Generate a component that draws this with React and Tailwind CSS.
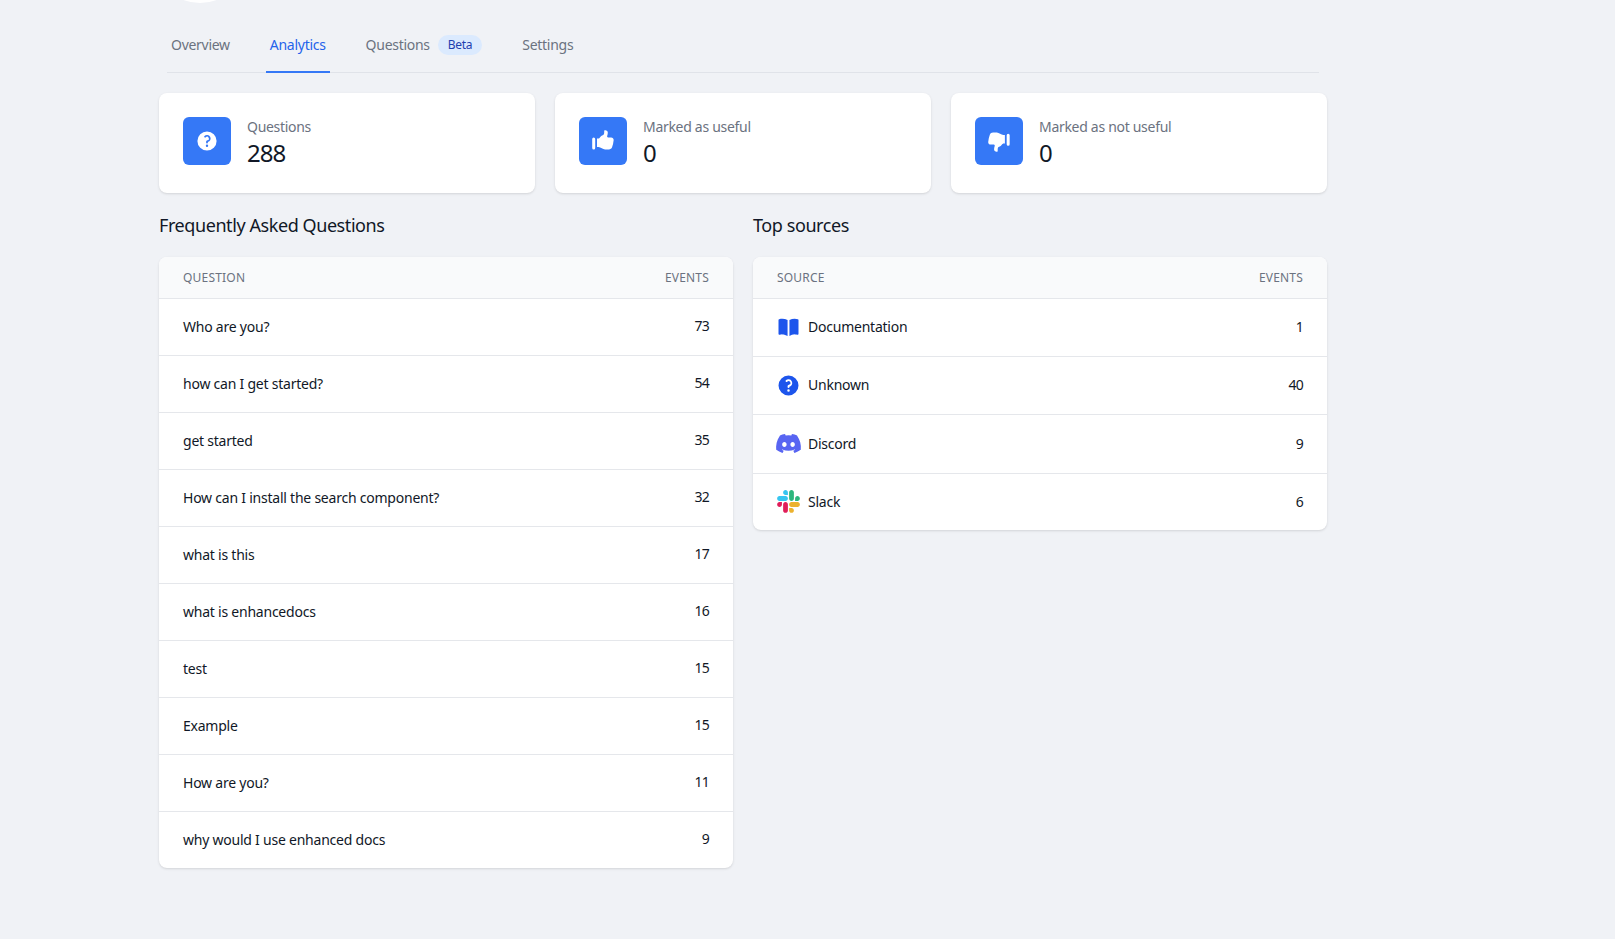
import React from "react";
import { FaDiscord } from "react-icons/fa";

const QuestionIcon = ({ className }) => (
  <svg viewBox="0 0 20 20" fill="currentColor" className={className}>
    <path fillRule="evenodd" clipRule="evenodd" d="M18 10a8 8 0 1 1-16 0 8 8 0 0 1 16 0ZM8.94 6.94a.75.75 0 1 1-1.061-1.061 3 3 0 1 1 2.871 5.026v.345a.75.75 0 0 1-1.5 0v-.5c0-.72.57-1.172 1.081-1.287A1.5 1.5 0 1 0 8.94 6.94ZM10 15a1 1 0 1 0 0-2 1 1 0 0 0 0 2Z" />
  </svg>
);

const ThumbUpIcon = ({ className }) => (
  <svg viewBox="0 0 20 20" fill="currentColor" className={className}>
    <path d="M1 8.25a1.25 1.25 0 1 1 2.5 0v7.5a1.25 1.25 0 1 1-2.5 0v-7.5ZM11 3V1.7c0-.268.14-.526.395-.607A2 2 0 0 1 14 3c0 .995-.182 1.948-.514 2.826-.204.54.166 1.174.744 1.174h2.52c1.243 0 2.261 1.01 2.146 2.247a23.864 23.864 0 0 1-1.341 5.974C17.153 16.323 16.072 17 14.9 17h-3.192a3 3 0 0 1-1.341-.317l-2.734-1.366A3 3 0 0 0 6.292 15H5V8h.963c.685 0 1.258-.483 1.612-1.068a4.011 4.011 0 0 1 2.166-1.73c.432-.143.853-.386 1.011-.814.16-.432.248-.9.248-1.388Z" />
  </svg>
);

const ThumbDownIcon = ({ className }) => (
  <svg viewBox="0 0 20 20" fill="currentColor" className={className}>
    <path d="M18.905 12.75a1.25 1.25 0 1 1-2.5 0v-7.5a1.25 1.25 0 0 1 2.5 0v7.5ZM8.905 17v1.3c0 .268-.14.526-.395.607A2 2 0 0 1 5.905 17c0-.995.182-1.948.514-2.826.204-.54-.166-1.174-.744-1.174h-2.52c-1.243 0-2.261-1.01-2.146-2.247.193-2.08.651-4.082 1.341-5.974C2.752 3.678 3.833 3 5.005 3h3.192a3 3 0 0 1 1.341.317l2.734 1.366A3 3 0 0 0 13.613 5h1.292v7h-.963c-.685 0-1.258.482-1.612 1.068a4.01 4.01 0 0 1-2.166 1.73c-.432.143-.853.386-1.011.814-.16.432-.248.9-.248 1.388Z" />
  </svg>
);

const BookIcon = ({ className }) => (
  <svg viewBox="0 0 20 20" fill="currentColor" className={className}>
    <path d="M10.75 16.82A7.462 7.462 0 0 1 15 15.5c.71 0 1.396.098 2.046.282A.75.75 0 0 0 18 15.06v-11a.75.75 0 0 0-.546-.721A9.006 9.006 0 0 0 15 3a8.963 8.963 0 0 0-4.25 1.065V16.82ZM9.25 4.065A8.963 8.963 0 0 0 5 3c-.85 0-1.673.118-2.454.339A.75.75 0 0 0 2 4.06v11a.75.75 0 0 0 .954.721A7.506 7.506 0 0 1 5 15.5c1.579 0 3.042.487 4.25 1.32V4.065Z" />
  </svg>
);

const SlackIcon = () => (
  <svg viewBox="0 0 127 127" className="h-[23px] w-[23px] shrink-0">
    <path d="M27.2 80c0 7.3-5.9 13.2-13.2 13.2C6.7 93.2.8 87.3.8 80c0-7.3 5.9-13.2 13.2-13.2h13.2V80zm6.6 0c0-7.3 5.9-13.2 13.2-13.2 7.3 0 13.2 5.9 13.2 13.2v33c0 7.3-5.9 13.2-13.2 13.2-7.3 0-13.2-5.9-13.2-13.2V80z" fill="#E01E5A" />
    <path d="M47 27c-7.3 0-13.2-5.9-13.2-13.2C33.8 6.5 39.7.6 47 .6c7.3 0 13.2 5.9 13.2 13.2V27H47zm0 6.7c7.3 0 13.2 5.9 13.2 13.2 0 7.3-5.9 13.2-13.2 13.2H13.9C6.6 60.1.7 54.2.7 46.9c0-7.3 5.9-13.2 13.2-13.2H47z" fill="#36C5F0" />
    <path d="M99.9 46.9c0-7.3 5.9-13.2 13.2-13.2 7.3 0 13.2 5.9 13.2 13.2 0 7.3-5.9 13.2-13.2 13.2H99.9V46.9zm-6.6 0c0 7.3-5.9 13.2-13.2 13.2-7.3 0-13.2-5.9-13.2-13.2V13.8C66.9 6.5 72.8.6 80.1.6c7.3 0 13.2 5.9 13.2 13.2v33.1z" fill="#2EB67D" />
    <path d="M80.1 99.8c7.3 0 13.2 5.9 13.2 13.2 0 7.3-5.9 13.2-13.2 13.2-7.3 0-13.2-5.9-13.2-13.2V99.8h13.2zm0-6.6c-7.3 0-13.2-5.9-13.2-13.2 0-7.3 5.9-13.2 13.2-13.2h33.1c7.3 0 13.2 5.9 13.2 13.2 0 7.3-5.9 13.2-13.2 13.2H80.1z" fill="#ECB22E" />
  </svg>
);

const stats = [
  { label: "Questions", value: "288", icon: <QuestionIcon className="h-6 w-6" /> },
  { label: "Marked as useful", value: "0", icon: <ThumbUpIcon className="h-6 w-6" /> },
  { label: "Marked as not useful", value: "0", icon: <ThumbDownIcon className="h-6 w-6" /> },
];

const questions = [
  ["Who are you?", 73],
  ["how can I get started?", 54],
  ["get started", 35],
  ["How can I install the search component?", 32],
  ["what is this", 17],
  ["what is enhancedocs", 16],
  ["test", 15],
  ["Example", 15],
  ["How are you?", 11],
  ["why would I use enhanced docs", 9],
];

const sources = [
  { name: "Documentation", events: 1, row: "h-[58px]", icon: <BookIcon className="h-[25px] w-[25px] shrink-0 text-[#1d55ec]" /> },
  { name: "Unknown", events: 40, row: "h-[58px]", icon: <QuestionIcon className="h-[25px] w-[25px] shrink-0 text-[#1d55ec]" /> },
  { name: "Discord", events: 9, row: "h-[59px]", icon: <FaDiscord className="h-[27px] w-[27px] shrink-0 text-[#5865f2]" /> },
  { name: "Slack", events: 6, row: "h-[57px]", icon: <SlackIcon /> },
];

const TableCard = ({ first, children }) => (
  <div className="overflow-hidden rounded-lg bg-white shadow">
    <table className="w-full border-collapse text-sm text-[#111827]">
      <thead>
        <tr className="h-[41px] border-b border-[#e5e7eb] bg-[#f9fafb] text-left text-xs text-[#6b7280] uppercase">
          <th className="px-6 pt-[2px] font-normal tracking-[0.2px]">{first}</th>
          <th className="px-6 pt-[2px] text-right font-normal tracking-[0.2px]">Events</th>
        </tr>
      </thead>
      <tbody>{children}</tbody>
    </table>
  </div>
);

const App = () => {
  return (
    <div className="min-h-screen bg-[#f0f2f6] pl-[159px] font-['Noto_Sans',sans-serif] tracking-[-0.23px]">
      <div className="w-[1168px]">
        {/* avatar scrolled almost out of view */}
        <div className="h-[3px] overflow-hidden">
          <div className="-mt-[93px] -ml-[7px] h-24 w-24 rounded-full bg-white"></div>
        </div>

        <nav className="mx-2 flex gap-8 border-b border-[#e0e3e9] pt-8 text-sm tracking-[-0.28px] text-[#6b7280]">
          <a className="-mb-px border-b-2 border-transparent px-1 pb-4">Overview</a>
          <a className="-mb-px border-b-2 border-[#3578f6] px-1 pb-4 text-[#2563eb]">Analytics</a>
          <a className="-mb-px flex border-b-2 border-transparent px-1 pb-4">
            Questions
            <span className="ml-2 flex h-5 items-center rounded-full bg-[#dbeafe] px-2.5 text-xs text-[#1e40af]">Beta</span>
          </a>
          <a className="-mb-px border-b-2 border-transparent px-1 pb-4">Settings</a>
        </nav>

        <div className="mt-5 grid grid-cols-3 gap-5">
          {stats.map((s) => (
            <div key={s.label} className="flex h-[100px] rounded-lg bg-white p-6 shadow">
              <div className="flex h-12 w-12 items-center justify-center rounded-md bg-[#3578f6] text-white">
                {s.icon}
              </div>
              <div className="ml-4">
                <div className="text-sm tracking-[-0.3px] text-[#6b7280]">{s.label}</div>
                <div className="text-2xl tracking-[-1px] text-[#111827]">{s.value}</div>
              </div>
            </div>
          ))}
        </div>

        <div className="mt-[18px] grid grid-cols-2 gap-5">
          <div>
            <h3 className="mb-[18px] text-lg tracking-[-0.42px] text-[#111827]">Frequently Asked Questions</h3>
            <TableCard first="Question">
              {questions.map(([q, n]) => (
                <tr key={q} className="h-[57px] border-b border-[#e5e7eb] last:border-b-0">
                  <td className="px-6">{q}</td>
                  <td className="px-6 pb-[2px] text-right tracking-[-0.7px]">{n}</td>
                </tr>
              ))}
            </TableCard>
          </div>
          <div>
            <h3 className="mb-[18px] text-lg tracking-[-0.42px] text-[#111827]">Top sources</h3>
            <TableCard first="Source">
              {sources.map((s) => (
                <tr key={s.name} className={s.row + " border-b border-[#e5e7eb] last:border-b-0"}>
                  <td className="px-6">
                    <div className="flex items-center">
                      <span className="-ml-px mr-2 flex h-6 w-6 items-center justify-center">{s.icon}</span>
                      {s.name}
                    </div>
                  </td>
                  <td className="px-6 text-right tracking-[-0.7px]">{s.events}</td>
                </tr>
              ))}
            </TableCard>
          </div>
        </div>
      </div>
    </div>
  );
};

export default App;
